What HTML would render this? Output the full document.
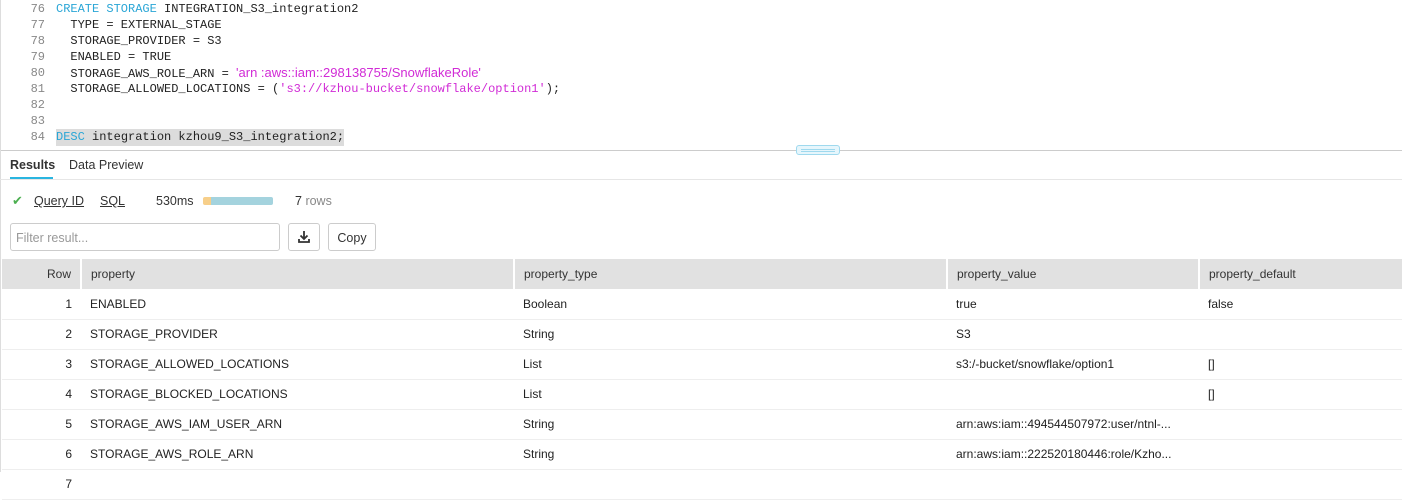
<!DOCTYPE html>
<html><head><style>
*{margin:0;padding:0;box-sizing:border-box}
body{width:1402px;height:472px;overflow:hidden;background:#fff;font-family:"Liberation Sans",sans-serif;position:relative;color:#222}
.code{position:absolute;left:0;top:0;width:1402px;height:150px;border-left:1px solid #ddd;font-family:"Liberation Mono",monospace;font-size:12px}
.ln{position:absolute;left:0;width:44px;text-align:right;color:#888;line-height:16px}
.tx{position:absolute;left:55px;white-space:pre;color:#222;line-height:16px}
.kw{color:#2aa6d6}.st{color:#d12bd6}
.abs{position:absolute}
table{position:absolute;left:2px;top:259px;border-collapse:collapse;font-size:12px}
td,th{height:30px;font-weight:normal;text-align:left;padding:0 9px;border-bottom:1px solid #eee}
th{background:#e1e1e1;border-left:2px solid #fff;color:#333;border-bottom:none}
th:first-child{border-left:none}
td.r,th.r{text-align:right}
</style></head><body>
<div class="code">
<div class="ln" style="top:1px">76</div><div class="tx" style="top:1px"><span class="kw">CREATE STORAGE</span> INTEGRATION_S3_integration2</div>
<div class="ln" style="top:17px">77</div><div class="tx" style="top:17px">  TYPE = EXTERNAL_STAGE</div>
<div class="ln" style="top:33px">78</div><div class="tx" style="top:33px">  STORAGE_PROVIDER = S3</div>
<div class="ln" style="top:49px">79</div><div class="tx" style="top:49px">  ENABLED = TRUE</div>
<div class="ln" style="top:65px">80</div><div class="tx" style="top:65px">  STORAGE_AWS_ROLE_ARN = <span class="st" style="font-family:'Liberation Sans',sans-serif;font-size:13px">'arn :aws::iam::298138755/SnowflakeRole'</span></div>
<div class="ln" style="top:81px">81</div><div class="tx" style="top:81px">  STORAGE_ALLOWED_LOCATIONS = (<span class="st">'s3://kzhou-bucket/snowflake/option1'</span>);</div>
<div class="ln" style="top:97px">82</div>
<div class="ln" style="top:113px">83</div>
<div class="ln" style="top:129px">84</div><div class="tx" style="top:129px;background:#dcdcdc;height:17px"><span class="kw">DESC</span> integration kzhou9_S3_integration2;</div>
</div>
<div class="abs" style="left:0;top:150px;width:1402px;border-top:1px solid #ccc"></div>
<div class="abs" style="left:796px;top:145px;width:44px;height:10px;border:1px solid #9fd9ee;border-radius:3px;background:#e6f6fc"><div style="margin:3px 4px;border-top:1px solid #9fd9ee;border-bottom:1px solid #9fd9ee;height:3px"></div></div>
<div class="abs" style="left:0;top:150px;height:322px;border-left:1px solid #ddd"></div>
<div class="abs" style="left:10px;top:158px;font-size:12.5px;font-weight:bold;color:#333">Results</div>
<div class="abs" style="left:10px;top:177px;width:43px;height:2px;background:#29b5e0"></div>
<div class="abs" style="left:69px;top:158px;font-size:12.5px;color:#333">Data Preview</div>
<div class="abs" style="left:0;top:179px;width:1402px;border-top:1px solid #e6e6e6"></div>
<div class="abs" style="left:12px;top:193px;color:#4caf50;font-size:13px">✔</div>
<div class="abs" style="left:34px;top:194px;font-size:12.5px;text-decoration:underline;color:#333">Query ID</div>
<div class="abs" style="left:100px;top:194px;font-size:12.5px;text-decoration:underline;color:#333">SQL</div>
<div class="abs" style="left:156px;top:194px;font-size:12.5px;color:#333">530ms</div>
<div class="abs" style="left:203px;top:197px;width:8px;height:8px;background:#f7cf8a;border-radius:2px 0 0 2px"></div>
<div class="abs" style="left:211px;top:197px;width:62px;height:8px;background:#a4d3de;border-radius:0 2px 2px 0"></div>
<div class="abs" style="left:295px;top:194px;font-size:12.5px;color:#333">7 <span style="color:#888">rows</span></div>
<div class="abs" style="left:10px;top:223px;width:270px;height:28px;border:1px solid #ccc;border-radius:3px;font-size:12.5px;color:#999;padding:7px 5px">Filter result...</div>
<div class="abs" style="left:288px;top:223px;width:32px;height:28px;border:1px solid #ccc;border-radius:3px"><svg width="30" height="26" viewBox="0 0 30 26"><path d="M15 7v8M11.5 11.5L15 15l3.5-3.5M10 15v3h10v-3" stroke="#333" stroke-width="1.8" fill="none"/></svg></div>
<div class="abs" style="left:328px;top:223px;width:48px;height:28px;border:1px solid #ccc;border-radius:3px;font-size:12.5px;color:#333;padding:7px 0;text-align:center">Copy</div>
<table>
<tr><th class="r" style="width:79px">Row</th><th style="width:433px">property</th><th style="width:433px">property_type</th><th style="width:252px">property_value</th><th style="width:203px">property_default</th></tr>
<tr><td class="r">1</td><td>ENABLED</td><td>Boolean</td><td>true</td><td>false</td></tr>
<tr><td class="r">2</td><td>STORAGE_PROVIDER</td><td>String</td><td>S3</td><td></td></tr>
<tr><td class="r">3</td><td>STORAGE_ALLOWED_LOCATIONS</td><td>List</td><td>s3:/-bucket/snowflake/option1</td><td>[]</td></tr>
<tr><td class="r">4</td><td>STORAGE_BLOCKED_LOCATIONS</td><td>List</td><td></td><td>[]</td></tr>
<tr><td class="r">5</td><td>STORAGE_AWS_IAM_USER_ARN</td><td>String</td><td>arn:aws:iam::494544507972:user/ntnl-...</td><td></td></tr>
<tr><td class="r">6</td><td>STORAGE_AWS_ROLE_ARN</td><td>String</td><td>arn:aws:iam::222520180446:role/Kzho...</td><td></td></tr>
<tr><td class="r">7</td><td></td><td></td><td></td><td></td></tr>
</table>
</body></html>
